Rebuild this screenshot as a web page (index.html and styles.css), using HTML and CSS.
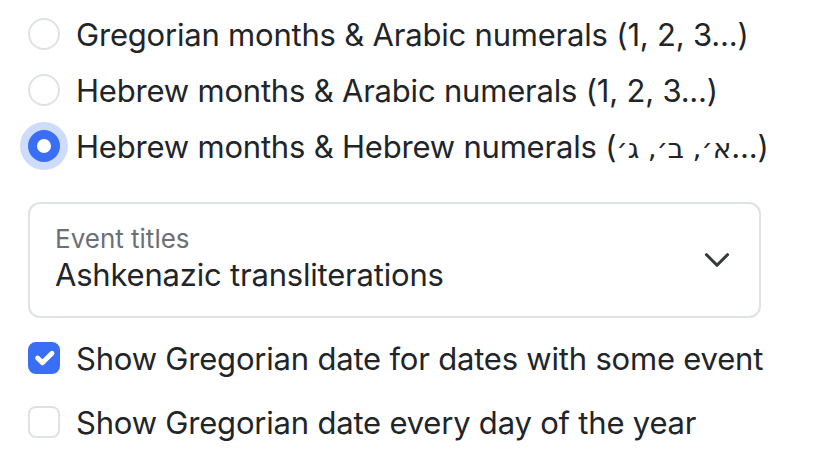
FILE: index.html
```html
<!DOCTYPE html>
<html>
<head>
<meta charset="utf-8">
<link rel="stylesheet" href="styles.css">
</head>
<body>
<div class="panel">
  <div class="radios">
    <label class="check"><span class="radio"></span><span class="text">Gregorian months &amp; Arabic numerals (1, 2, 3...)</span></label>
    <label class="check"><span class="radio"></span><span class="text">Hebrew months &amp; Arabic numerals (1, 2, 3...)</span></label>
    <label class="check"><span class="radio on"></span><span class="text">Hebrew months &amp; Hebrew numerals (<span class="he">א׳, ב׳, ג׳</span>...)</span></label>
  </div>
  <div class="select">
    <div class="select-body">
      <div class="select-label">Event titles</div>
      <div class="select-value">Ashkenazic transliterations</div>
    </div>
    <svg class="chev" width="28" height="28" viewBox="0 0 16 16"><path d="m2 5 6 6 6-6" fill="none" stroke="#343a40" stroke-width="1.8" stroke-linecap="round" stroke-linejoin="round"/></svg>
  </div>
  <div class="boxes">
    <label class="check"><span class="box on"><svg width="32" height="32" viewBox="0 0 20 20"><path d="M6 10l3 3 6-6" fill="none" stroke="#fff" stroke-width="3" stroke-linecap="round" stroke-linejoin="round"/></svg></span><span class="text">Show Gregorian date for dates with some event</span></label>
    <label class="check"><span class="box"></span><span class="text">Show Gregorian date every day of the year</span></label>
  </div>
</div>
</body>
</html>
```
FILE: styles.css
```css
html, body {
  margin: 0;
  padding: 0;
  background: #fff;
}
body {
  font-family: Inter, "Noto Sans", sans-serif;
  color: #212529;
}
.panel {
  padding: 6px 0 0 28px;
}
.radios {
  display: flex;
  flex-direction: column;
}
.check {
  display: flex;
  align-items: center;
  gap: 16px;
  height: 56px;
  font-size: 31px;
  letter-spacing: -0.2px;
  white-space: nowrap;
}
.he {
  font-family: "DejaVu Sans", sans-serif;
  font-size: 28px;
}
.radio {
  flex: none;
  box-sizing: border-box;
  width: 32px;
  height: 32px;
  border-radius: 50%;
  border: 2px solid #dee2e6;
  background: #fff;
}
.radio.on {
  border: 9px solid #3a6ff5;
  background: #fff;
  box-shadow: 0 0 0 8px #cedcfb;
}
.select {
  margin-top: 28px;
  box-sizing: border-box;
  width: 733px;
  height: 116px;
  border: 2px solid #dee2e6;
  border-radius: 12px;
  display: flex;
  align-items: center;
  padding: 0 28px 0 25px;
}
.select-body {
  flex: 1;
  display: flex;
  flex-direction: column;
}
.select-label {
  font-size: 26px;
  color: #6c6f74;
  line-height: 30px;
}
.select-value {
  font-size: 31px;
  line-height: 42px;
  letter-spacing: -0.2px;
}
.chev {
  flex: none;
}
.boxes {
  margin-top: 12px;
  display: flex;
  flex-direction: column;
  gap: 8px;
}
.box {
  flex: none;
  box-sizing: border-box;
  width: 32px;
  height: 32px;
  border-radius: 8px;
  border: 2px solid #dee2e6;
  background: #fff;
  display: flex;
  align-items: center;
  justify-content: center;
}
.box.on {
  background: #3a6ff5;
  border-color: #3a6ff5;
}
.box svg {
  flex: none;
}
```
